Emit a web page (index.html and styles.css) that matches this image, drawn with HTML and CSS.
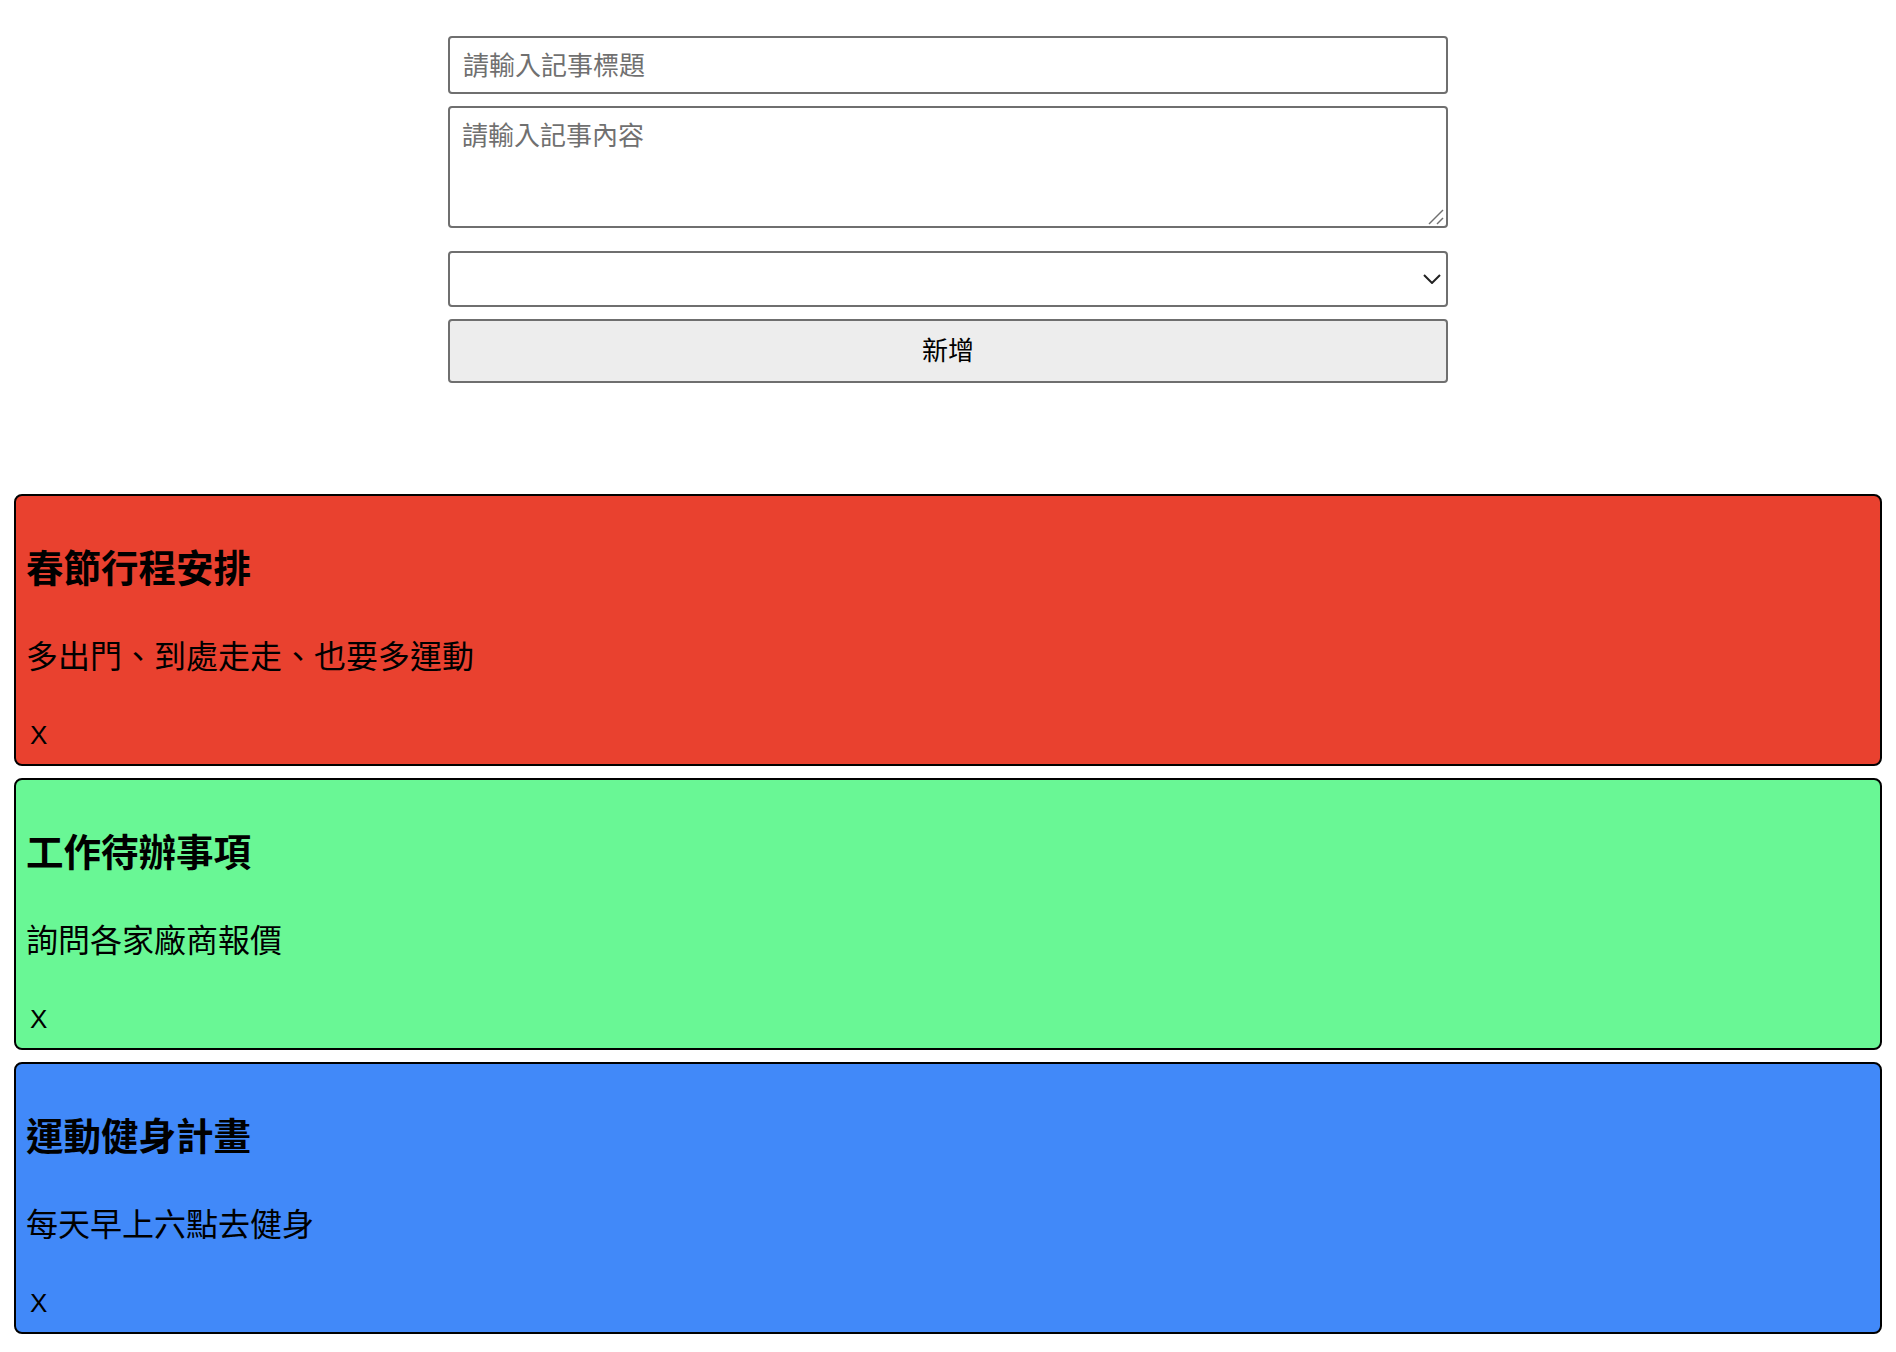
FILE: index.html
```html
<!DOCTYPE html>
<html lang="zh-Hant">
<head>
<meta charset="utf-8">
<title>記事本</title>
<link rel="stylesheet" href="styles.css">
</head>
<body>
<form class="note-form">
  <input class="field title-field" type="text" placeholder="請輸入記事標題">
  <div class="textarea-wrap">
    <textarea class="field content-field" placeholder="請輸入記事內容"></textarea>
    <svg class="grip" width="18" height="18" viewBox="0 0 18 18"><line x1="2" y1="16" x2="16" y2="2" stroke="#707070" stroke-width="1.5"/><line x1="10" y1="16" x2="16" y2="10" stroke="#707070" stroke-width="1.5"/></svg>
  </div>
  <div class="select-wrap">
    <select class="field color-field"><option value=""></option></select>
    <svg class="chevron" width="18" height="10" viewBox="0 0 18 10"><polyline points="1,1 9,9 17,1" fill="none" stroke="#222" stroke-width="2"/></svg>
  </div>
  <button class="add-btn" type="button">新增</button>
</form>

<div class="notes">
  <div class="note note-red">
    <h2 class="note-title">春節行程安排</h2>
    <p class="note-body">多出門、到處走走、也要多運動</p>
    <div class="note-del">X</div>
  </div>
  <div class="note note-green">
    <h2 class="note-title">工作待辦事項</h2>
    <p class="note-body">詢問各家廠商報價</p>
    <div class="note-del">X</div>
  </div>
  <div class="note note-blue">
    <h2 class="note-title">運動健身計畫</h2>
    <p class="note-body">每天早上六點去健身</p>
    <div class="note-del">X</div>
  </div>
</div>
</body>
</html>
```

FILE: styles.css
```css
* { box-sizing: border-box; }

html, body {
  margin: 0;
  padding: 0;
  background: #fff;
}

body {
  font-family: "Noto Sans CJK TC", "Noto Sans CJK SC", sans-serif;
  color: #000;
}

.note-form {
  width: 1000px;
  margin: 36px auto 0;
  display: flex;
  flex-direction: column;
}

.field {
  display: block;
  width: 100%;
  border: 2px solid #6f6f6f;
  border-radius: 4px;
  background: #fff;
  font-family: "Noto Sans CJK TC", sans-serif;
  font-size: 26px;
  color: #000;
  margin: 0;
}

.field::placeholder {
  color: #707070;
}

.title-field {
  height: 58px;
  padding: 0 13px 4px;
}

.textarea-wrap {
  position: relative;
  margin-top: 12px;
}

.content-field {
  height: 122px;
  padding: 8px 12px;
  line-height: 36px;
  resize: none;
}

.grip {
  position: absolute;
  right: 3px;
  bottom: 2px;
  pointer-events: none;
}

.select-wrap {
  position: relative;
  margin-top: 23px;
}

.color-field {
  height: 56px;
  appearance: none;
  -webkit-appearance: none;
  padding: 0 12px;
}

.chevron {
  position: absolute;
  right: 7px;
  top: 23px;
  pointer-events: none;
}

.add-btn {
  display: block;
  width: 100%;
  height: 64px;
  margin-top: 12px;
  border: 2px solid #6f6f6f;
  border-radius: 4px;
  background: #ededed;
  font-family: "Noto Sans CJK TC", sans-serif;
  font-size: 26px;
  color: #000;
  padding: 0 0 5px;
}

.notes {
  margin: 111px 14px 0;
  display: flex;
  flex-direction: column;
  gap: 12px;
  padding-bottom: 20px;
}

.note {
  border: 2px solid #000;
  border-radius: 8px;
  padding: 45px 10px 14px;
}

.note-red { background: #e9412f; }
.note-green { background: #69f795; }
.note-blue { background: #4189f9; }

.note-title {
  margin: 0 0 43px;
  font-size: 37.5px;
  line-height: 50px;
  font-weight: 700;
}

.note-body {
  margin: 0 0 46px;
  font-size: 32px;
  line-height: 40px;
}

.note-del {
  font-family: "Liberation Sans", Arial, sans-serif;
  font-size: 26px;
  line-height: 30px;
  padding-left: 4px;
}
```
